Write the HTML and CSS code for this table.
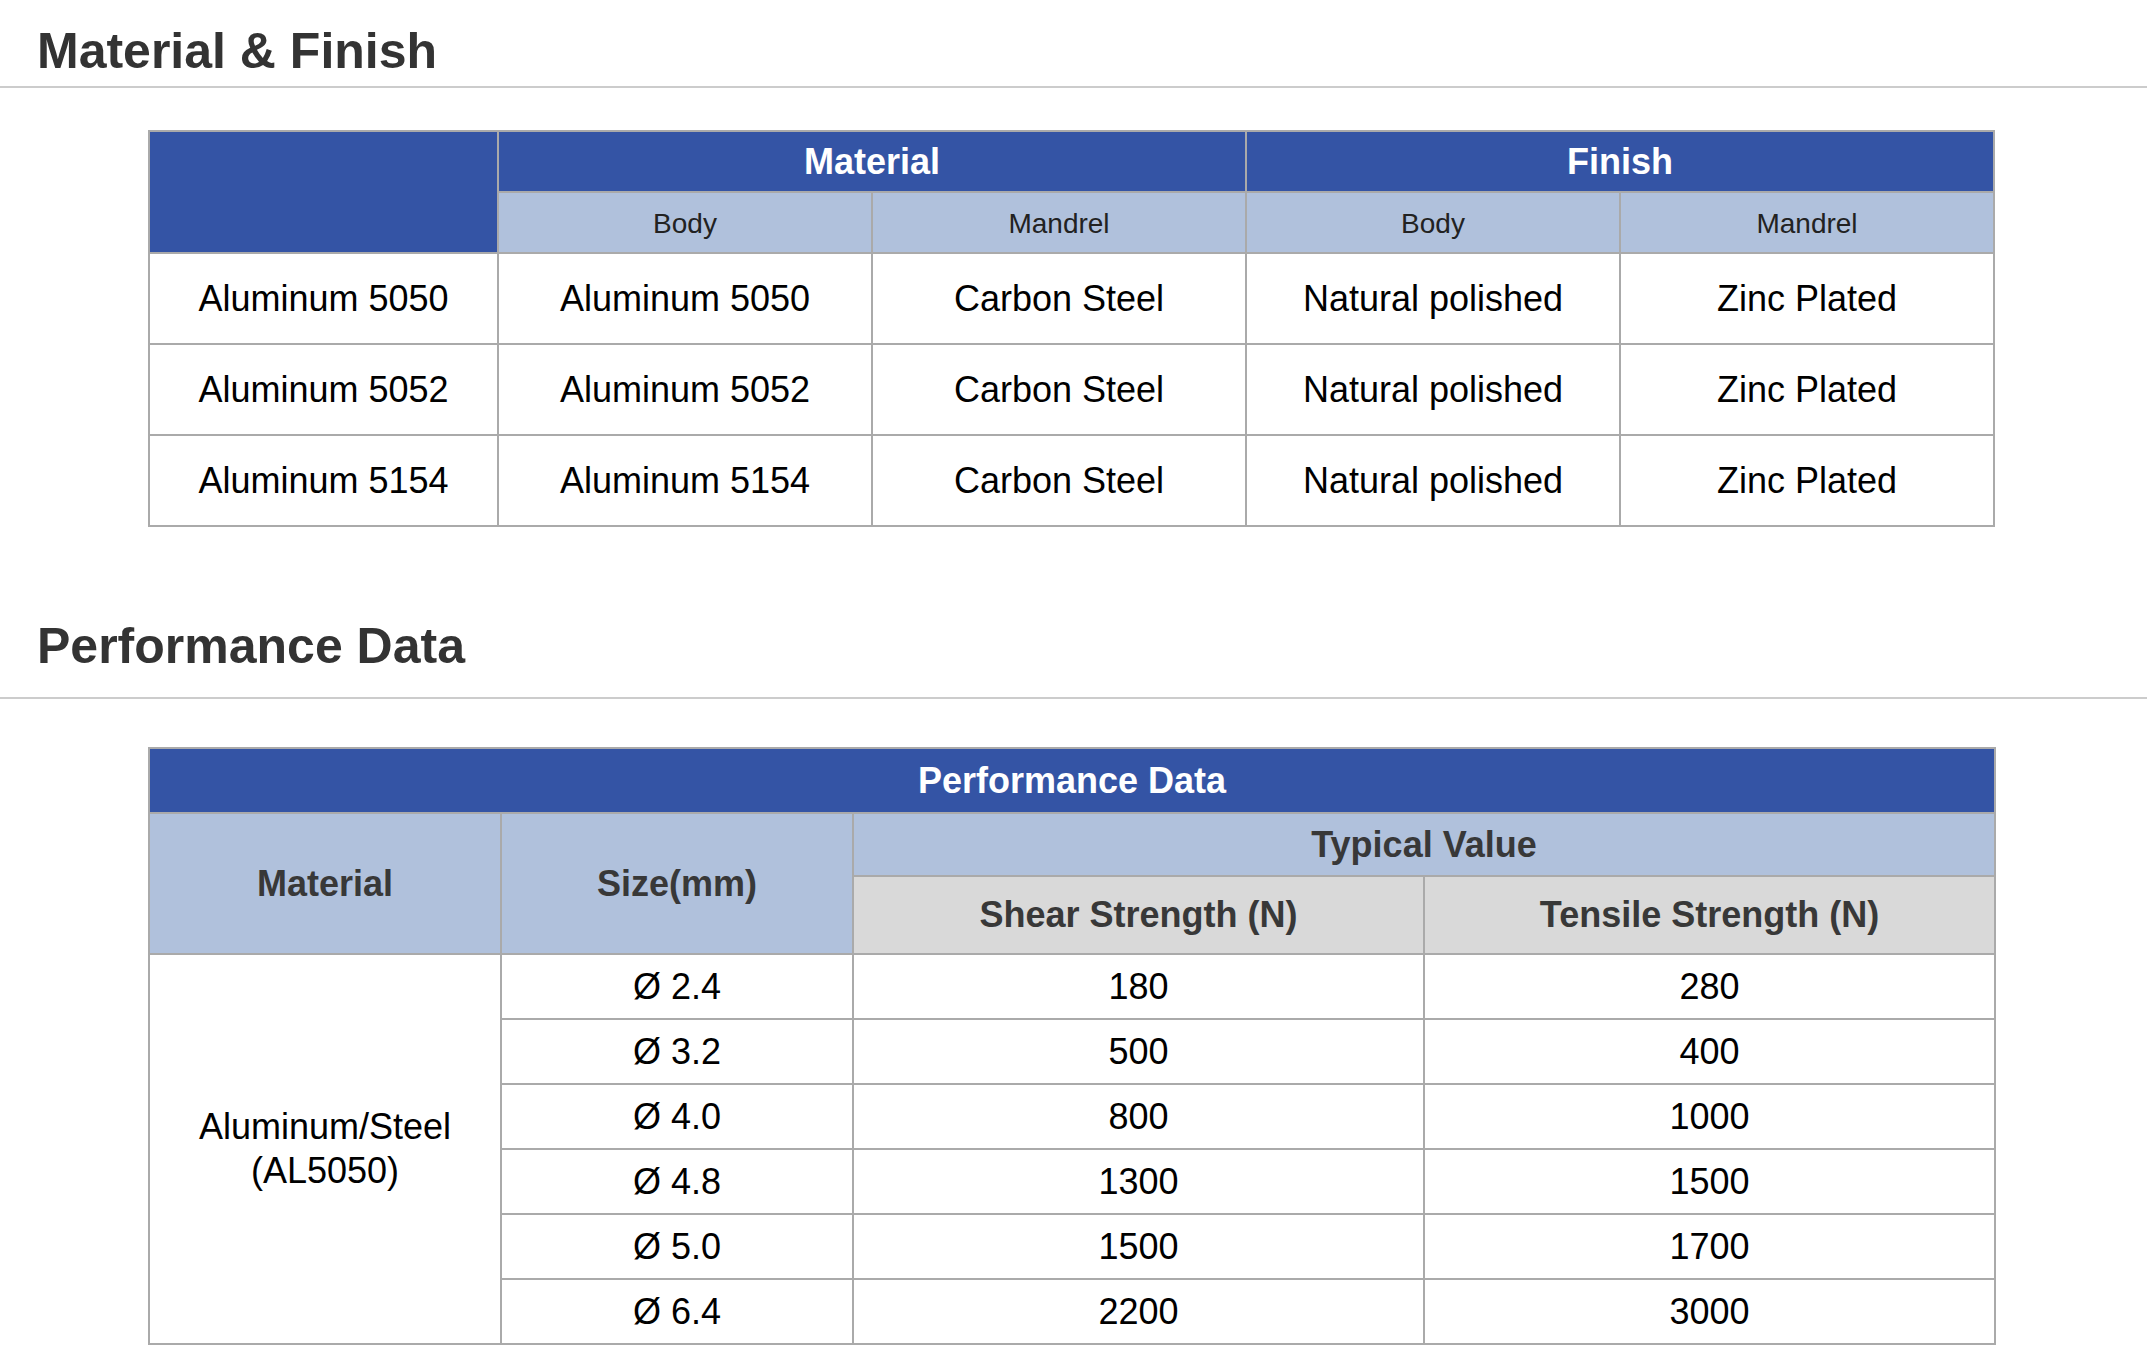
FILE: index.html
```html
<!DOCTYPE html>
<html lang="en">
<head>
<meta charset="utf-8">
<title>Material &amp; Finish</title>
<link rel="stylesheet" href="styles.css">
</head>
<body>
<div class="page">
  <h2 class="section-title">Material &amp; Finish</h2>
  <table class="spec mf">
    <colgroup>
      <col class="c-first">
      <col class="c-mf"><col class="c-mf"><col class="c-mf"><col class="c-mf">
    </colgroup>
    <thead>
      <tr class="mf-h1">
        <th class="blue" rowspan="2"></th>
        <th class="blue" colspan="2">Material</th>
        <th class="blue" colspan="2">Finish</th>
      </tr>
      <tr class="mf-h2">
        <th class="light small">Body</th>
        <th class="light small">Mandrel</th>
        <th class="light small">Body</th>
        <th class="light small">Mandrel</th>
      </tr>
    </thead>
    <tbody>
      <tr class="mf-row"><td>Aluminum 5050</td><td>Aluminum 5050</td><td>Carbon Steel</td><td>Natural polished</td><td>Zinc Plated</td></tr>
      <tr class="mf-row"><td>Aluminum 5052</td><td>Aluminum 5052</td><td>Carbon Steel</td><td>Natural polished</td><td>Zinc Plated</td></tr>
      <tr class="mf-row"><td>Aluminum 5154</td><td>Aluminum 5154</td><td>Carbon Steel</td><td>Natural polished</td><td>Zinc Plated</td></tr>
    </tbody>
  </table>

  <h2 class="section-title second">Performance Data</h2>
  <table class="spec pd">
    <colgroup>
      <col class="c-pd-a"><col class="c-pd-a"><col class="c-pd-b"><col class="c-pd-b">
    </colgroup>
    <thead>
      <tr class="pd-h1"><th class="blue" colspan="4">Performance Data</th></tr>
      <tr class="pd-h2">
        <th class="light" rowspan="2">Material</th>
        <th class="light" rowspan="2">Size(mm)</th>
        <th class="light" colspan="2">Typical Value</th>
      </tr>
      <tr class="pd-h3">
        <th class="grey">Shear Strength (N)</th>
        <th class="grey">Tensile Strength (N)</th>
      </tr>
    </thead>
    <tbody>
      <tr class="pd-row"><td class="mat" rowspan="6">Aluminum/Steel<br>(AL5050)</td><td>Ø 2.4</td><td>180</td><td>280</td></tr>
      <tr class="pd-row"><td>Ø 3.2</td><td>500</td><td>400</td></tr>
      <tr class="pd-row"><td>Ø 4.0</td><td>800</td><td>1000</td></tr>
      <tr class="pd-row"><td>Ø 4.8</td><td>1300</td><td>1500</td></tr>
      <tr class="pd-row"><td>Ø 5.0</td><td>1500</td><td>1700</td></tr>
      <tr class="pd-row"><td>Ø 6.4</td><td>2200</td><td>3000</td></tr>
    </tbody>
  </table>
</div>
</body>
</html>
```
FILE: styles.css
```css
html, body {
  margin: 0;
  padding: 0;
  background: #ffffff;
}

body {
  font-family: "Liberation Sans", Arial, sans-serif;
  color: #000;
}

.page {
  padding-top: 22px;
}

.section-title {
  margin: 0;
  font-size: 50px;
  font-weight: bold;
  line-height: 58px;
  color: #333333;
  padding: 0 0 6px 37px;
  border-bottom: 2px solid #cccccc;
}

.section-title.second {
  margin-top: 90px;
  padding-bottom: 22px;
}

.spec {
  border-collapse: collapse;
  table-layout: fixed;
  margin-left: 148px;
  width: 1847px;
  border: 2px solid #aaaaaa;
}

.spec th,
.spec td {
  border: 2px solid #aaaaaa;
  text-align: center;
  vertical-align: middle;
  padding: 0;
  font-size: 36px;
}

.spec th {
  font-weight: bold;
}

.spec .blue {
  background: #3454a5;
  color: #ffffff;
}

.spec .light {
  background: #b0c1dc;
  color: #383838;
}

.spec .grey {
  background: #d9d9d9;
  color: #383838;
}

.spec .small {
  font-size: 28px;
  font-weight: normal;
  color: #222222;
  padding-top: 3px;
}

.mf {
  margin-top: 42px;
}

.c-first { width: 349px; }
.c-mf { width: 374px; }

.mf-h1 { height: 61px; }
.mf-h2 { height: 61px; }
.mf-row { height: 91px; }

.pd {
  margin-top: 48px;
}

.c-pd-a { width: 352px; }
.c-pd-b { width: 571px; }

.pd-h1 { height: 65px; }
.pd-h2 { height: 63px; }
.pd-h3 { height: 78px; }
.pd-row { height: 65px; }

.spec td.mat {
  line-height: 44px;
}
```
